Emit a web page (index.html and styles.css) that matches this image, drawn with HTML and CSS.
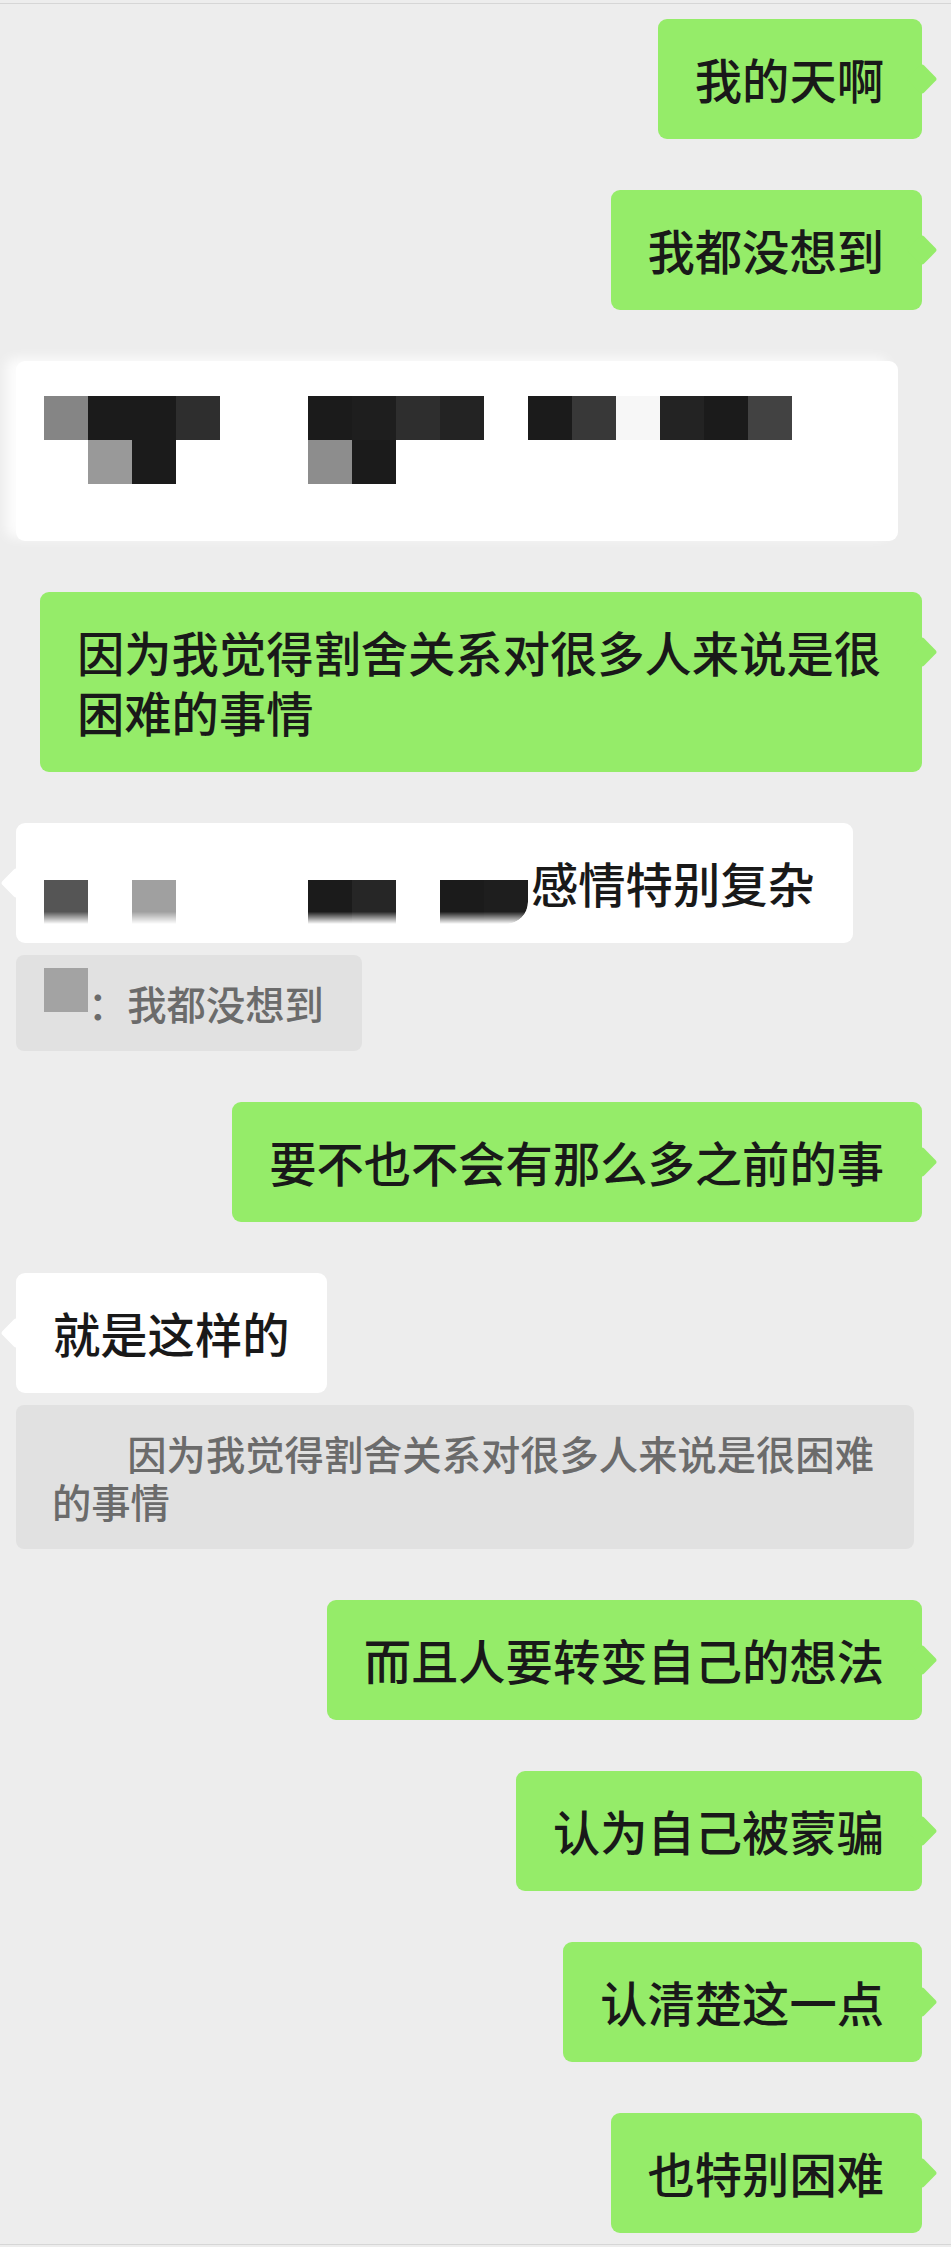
FILE: index.html
```html
<!DOCTYPE html>
<html>
  <head>
    <meta charset="utf-8">
    <title>聊天记录</title>
    <link rel="stylesheet" href="styles.css">
  </head>
  <body>

    <div class="chat">

      <div class="row out">
        <div class="bubble">我的天啊</div>
      </div>

      <div class="row out">
        <div class="bubble">我都没想到</div>
      </div>

      <!-- whole message was blurred out in the screenshot -->
      <div class="row in">
        <div class="bubble no-tail haze">
          <div class="masked-lines"></div>
          <div class="mosaic">
            <i class="g1"></i><i class="k"></i><i class="k"></i><i class="k3"></i><i></i><i></i>
            <i class="k"></i><i class="k1"></i><i class="k3"></i><i class="k2"></i><i></i>
            <i class="k"></i><i class="k4"></i><i class="w"></i><i class="k2"></i><i class="k"></i><i class="k5"></i>
            <i></i><i class="g3"></i><i class="k"></i><i></i><i></i><i></i><i class="g2"></i><i class="k"></i>
          </div>
        </div>
      </div>

      <div class="row out">
        <div class="bubble">因为我觉得割舍关系对很多人来说是很困难的事情</div>
      </div>

      <div class="row in">
        <div class="bubble"><span class="masked"></span>感情特别复杂
          <div class="mosaic low fade">
            <i class="k6"></i><i></i><i class="g4"></i><i></i><i></i><i></i>
            <i class="k"></i><i class="k7"></i><i></i><i class="k"></i><i class="k1 blob"></i>
          </div>
        </div>
        <div class="quote"><span class="name"></span>：我都没想到</div>
      </div>

      <div class="row out">
        <div class="bubble">要不也不会有那么多之前的事</div>
      </div>

      <div class="row in">
        <div class="bubble">就是这样的</div>
        <div class="quote"><span class="erased"><span class="name"></span>：</span>因为我觉得割舍关系对很多人来说是很困难的事情</div>
      </div>

      <div class="row out">
        <div class="bubble">而且人要转变自己的想法</div>
      </div>

      <div class="row out">
        <div class="bubble">认为自己被蒙骗</div>
      </div>

      <div class="row out">
        <div class="bubble">认清楚这一点</div>
      </div>

      <div class="row out">
        <div class="bubble">也特别困难</div>
      </div>

    </div>

  </body>
</html>
```

FILE: styles.css
```css
body {
    margin: 0;
    padding: 0;
    background-color: #ededed;
    font-family: "Noto Sans CJK SC", "Noto Sans", sans-serif;
}

.chat {
    margin-top: 3px;
    border-top: 1px solid #d6d6d6;
    border-bottom: 1px solid #d6d6d6;
    padding: 15px 29px 11px 16px;
    display: flex;
    flex-direction: column;
    gap: 51px;
}

.row {
    display: flex;
    flex-direction: column;
    align-items: flex-start;
    gap: 12px;
}

.row.out {
    align-items: flex-end;
}

.bubble {
    position: relative;
    box-sizing: border-box;
    max-width: 882px;
    padding: 30px 38px 30px 37px;
    border-radius: 9px;
    font-size: 47.3px;
    font-weight: 500;
    line-height: 60px;
    color: #191919;
    background-color: #ffffff;
}

.out .bubble {
    background-color: #95ec69;
}

/* little pointer on the side of each bubble */
.bubble::after {
    content: '';
    position: absolute;
    top: 49px;
    width: 22px;
    height: 22px;
    border-radius: 3px;
    background-color: inherit;
    transform: rotate(45deg);
}

.out .bubble::after {
    right: -11px;
}

.in .bubble::after {
    left: -11px;
}

.bubble.no-tail::after {
    display: none;
}

.haze {
    box-shadow: -10px -3px 12px rgba(255, 255, 255, 0.85);
}

.masked-lines {
    width: 807px;
    height: 120px;
}

.masked {
    display: inline-block;
    width: 478px;
    height: 1px;
}

/* pixelated cover over the hidden text */
.mosaic {
    position: absolute;
    left: 28px;
    top: 35px;
    display: grid;
    grid-template-columns: repeat(17, 44px);
    grid-auto-rows: 44px;
}

.mosaic.low {
    top: 57px;
}

.mosaic.fade > i {
    -webkit-mask-image: linear-gradient(to bottom, #000 72%, transparent);
    mask-image: linear-gradient(to bottom, #000 72%, transparent);
}

.mosaic .blob {
    border-bottom-right-radius: 22px;
}

.k  { background-color: #1b1b1b; }
.k1 { background-color: #1e1e1e; }
.k2 { background-color: #232323; }
.k3 { background-color: #2e2e2e; }
.k4 { background-color: #383838; }
.k5 { background-color: #424242; }
.k6 { background-color: #555555; }
.k7 { background-color: #262626; }
.g1 { background-color: #858585; }
.g2 { background-color: #8d8d8d; }
.g3 { background-color: #999999; }
.g4 { background-color: #a0a0a0; }
.w  { background-color: #f7f7f7; }

.quote {
    box-sizing: border-box;
    max-width: 898px;
    padding: 24px 38px 24px 36px;
    border-radius: 8px;
    background-color: #e1e1e1;
    color: #6b6b6b;
    font-size: 39.3px;
    font-weight: 500;
    line-height: 48px;
}

.name {
    display: inline-block;
    width: 44px;
    height: 44px;
    margin: -11px 0 0 -8px;
    vertical-align: top;
    background-color: #a3a3a3;
}

.erased {
    visibility: hidden;
}
```
